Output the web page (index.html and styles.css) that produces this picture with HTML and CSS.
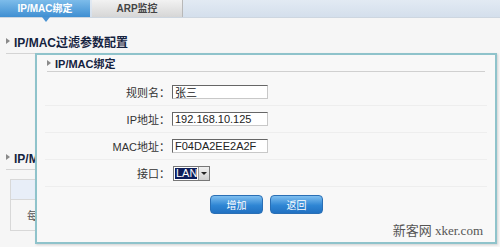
FILE: index.html
```html
<!DOCTYPE html>
<html lang="zh-CN">
<head>
    <meta charset="UTF-8">
    <title>IP/MAC绑定</title>
    <link rel="stylesheet" href="styles.css">
</head>
<body>
    <div class="tabs">
        <div class="tab active">IP/MAC绑定<span class="pointer"></span></div>
        <div class="tab">ARP监控</div>
    </div>

    <div class="page">
        <div class="section-title"><span class="arrow"></span>IP/MAC过滤参数配置</div>
        <div class="gap"></div>
        <div class="section-title"><span class="arrow"></span>IP/MAC绑定列表</div>
        <table class="list">
            <tr class="head"><td>&nbsp;</td></tr>
            <tr><td class="cell">每页</td></tr>
        </table>
    </div>

    <div class="dialog">
        <div class="dialog-title"><span class="arrow"></span>IP/MAC绑定</div>
        <div class="form">
            <div class="row">
                <label>规则名：</label>
                <input type="text" value="张三">
            </div>
            <div class="row">
                <label>IP地址：</label>
                <input type="text" value="192.168.10.125">
            </div>
            <div class="row">
                <label>MAC地址：</label>
                <input type="text" value="F04DA2EE2A2F">
            </div>
            <div class="row">
                <label>接口：</label>
                <div class="select"><span class="sel-value">LAN</span><span class="sel-btn"></span></div>
            </div>
        </div>
        <div class="buttons">
            <button>增加</button>
            <button>返回</button>
        </div>
        <div class="watermark">新客网 xker.com</div>
    </div>
</body>
</html>
```

FILE: styles.css
```css
body {
    margin: 0;
    background-color: #f6f6f6;
    font-family: "Liberation Sans", "Noto Sans CJK SC", sans-serif;
    font-size: 11px;
    color: #222;
    height: 247px;
    overflow: hidden;
    position: relative;
}

.tabs {
    display: flex;
    gap: 2px;
    height: 17px;
    background: linear-gradient(#e2eaf3, #d4dfec);
    border-bottom: 1px solid #cdd6e0;
}

.tab {
    position: relative;
    width: 90px;
    line-height: 17px;
    text-align: center;
    font-weight: bold;
    font-size: 10px;
    color: #444;
    background: linear-gradient(#f2f2f2, #d6d6d6);
    border-right: 1px solid #b8b8b8;
}

.tab.active {
    color: #fff;
    background: linear-gradient(#7dbcea, #3f8fd2);
    border-right: none;
}

.pointer {
    position: absolute;
    left: 42px;
    top: 17px;
    border-left: 4px solid transparent;
    border-right: 4px solid transparent;
    border-top: 5px solid #4a93d3;
}

.page {
    padding: 11px 6px 0 6px;
}

.section-title {
    display: flex;
    align-items: center;
    height: 24px;
    font-size: 12px;
    font-weight: bold;
    color: #15233f;
    border-bottom: 1px solid #d4d4d4;
}

.arrow {
    width: 0;
    height: 0;
    margin-right: 4px;
    border-top: 3px solid transparent;
    border-bottom: 3px solid transparent;
    border-left: 4px solid #8a8a8a;
}

.gap {
    height: 91px;
}

.list {
    margin: 9px 0 0 4px;
    width: 480px;
    border-collapse: collapse;
    border: 1px solid #d8d8d8;
}

.list .head td {
    height: 17px;
    background-color: #e8eef8;
    border-bottom: 1px solid #d8d8d8;
}

.list .cell {
    height: 28px;
    padding-left: 16px;
    color: #555;
}

.dialog {
    position: absolute;
    left: 35px;
    top: 53px;
    width: 458px;
    height: 187px;
    background-color: #f8f8f8;
    border: 2px solid #8fc3cb;
    box-shadow: 1px 1px 2px rgba(0, 0, 0, 0.15);
}

.dialog-title {
    display: flex;
    align-items: center;
    margin: 0 10px 0 10px;
    height: 16px;
    font-size: 11px;
    font-weight: bold;
    color: #15233f;
    border-bottom: 1px solid #d0d0d0;
}

.form {
    margin: 7px 8px 0 8px;
}

.row {
    display: flex;
    align-items: center;
    height: 26px;
    border-bottom: 1px solid #eeeeee;
}

.row label {
    width: 125px;
    text-align: right;
    color: #333;
}

.row input {
    width: 90px;
    height: 12px;
    margin: 0 0 0 2px;
    padding: 0 2px;
    font-family: "Liberation Sans", "Noto Sans CJK SC", sans-serif;
    font-size: 11px;
    color: #222;
    background: #fff;
    border: 1px solid #c8c8c8;
    border-top-color: #666;
    border-left-color: #666;
}

.select {
    display: flex;
    height: 13px;
    margin-left: 3px;
    border: 1px solid #777;
    background: #fff;
}

.sel-value {
    width: 21px;
    margin: 1px 1px 1px 1px;
    padding-left: 1px;
    line-height: 11px;
    color: #fff;
    background-color: #0e1e5a;
}

.sel-btn {
    position: relative;
    width: 10px;
    background: linear-gradient(#f0f0f0, #cfcfcf);
    border-left: 1px solid #999;
}

.sel-btn::after {
    content: "";
    position: absolute;
    left: 2px;
    top: 5px;
    border-left: 3px solid transparent;
    border-right: 3px solid transparent;
    border-top: 3px solid #222;
}

.buttons {
    display: flex;
    justify-content: flex-start;
    gap: 7px;
    margin: 8px 0 0 173px;
}

.buttons button {
    width: 53px;
    height: 19px;
    padding: 0;
    font-family: "Liberation Sans", "Noto Sans CJK SC", sans-serif;
    font-size: 10px;
    color: #fff;
    background: linear-gradient(#7fbff0, #2f86d4 55%, #2171c2);
    border: 1px solid #2a6fb5;
    border-radius: 4px;
}

.watermark {
    position: absolute;
    right: 12px;
    bottom: 3px;
    font-family: "Liberation Serif", "Noto Sans CJK SC", serif;
    font-size: 13px;
    color: #555;
}
```
